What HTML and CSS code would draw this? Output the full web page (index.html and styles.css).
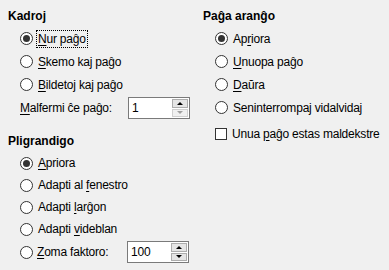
FILE: index.html
```html
<!DOCTYPE html>
<html lang="en">
<head>
    <meta charset="UTF-8">
    <title>Vido</title>
    <link rel="stylesheet" href="styles.css">
</head>
<body>
    <div class="dialog">
        <div class="column">
            <div class="group">
                <h2>Kadroj</h2>
                <label class="option"><span class="radio checked"></span><span class="focus"><u>N</u>ur paĝo</span></label>
                <label class="option"><span class="radio"></span><span><u>S</u>kemo kaj paĝo</span></label>
                <label class="option"><span class="radio"></span><span><u>B</u>ildetoj kaj paĝo</span></label>
                <div class="option field">
                    <span class="field-label"><u>M</u>alfermi ĉe paĝo:</span>
                    <div class="spin">
                        <span class="spin-value">1</span>
                        <div class="spin-buttons">
                            <span class="spin-btn up"></span>
                            <span class="spin-btn down disabled"></span>
                        </div>
                    </div>
                </div>
            </div>

            <div class="group zoom">
                <h2>Pligrandigo</h2>
                <label class="option small"><span class="radio checked"></span><span><u>A</u>priora</span></label>
                <label class="option small"><span class="radio"></span><span>Adapti al <u>f</u>enestro</span></label>
                <label class="option small"><span class="radio"></span><span>Adapti <u>l</u>arĝon</span></label>
                <label class="option small"><span class="radio"></span><span>Adapti <u>v</u>ideblan</span></label>
                <div class="option field tall">
                    <span class="radio"></span>
                    <span class="field-label short"><u>Z</u>oma faktoro:</span>
                    <div class="spin">
                        <span class="spin-value">100</span>
                        <div class="spin-buttons">
                            <span class="spin-btn up"></span>
                            <span class="spin-btn down"></span>
                        </div>
                    </div>
                </div>
            </div>
        </div>

        <div class="column">
            <div class="group">
                <h2>Paĝa aranĝo</h2>
                <label class="option"><span class="radio checked"></span><span>Ap<u>r</u>iora</span></label>
                <label class="option"><span class="radio"></span><span><u>U</u>nuopa paĝo</span></label>
                <label class="option"><span class="radio"></span><span><u>D</u>aŭra</span></label>
                <label class="option"><span class="radio"></span><span>Seninterrompa<u>j</u> vidalvidaj</span></label>
            </div>
            <label class="option check-row"><span class="checkbox"></span><span>Unua <u>p</u>aĝo estas maldekstre</span></label>
        </div>
    </div>
</body>
</html>
```

FILE: styles.css
```css
* {
    margin: 0;
    padding: 0;
    box-sizing: border-box;
}

body {
    background: #f0f0f0;
    color: #000;
    font-family: 'Liberation Sans', Arial, sans-serif;
    font-size: 12px;
}

.dialog {
    display: grid;
    grid-template-columns: 195px 1fr;
    padding: 8px 0 0 8px;
}

h2 {
    font-size: 12px;
    font-weight: bold;
    line-height: 16px;
    margin-bottom: 3px;
}

.option {
    display: flex;
    align-items: center;
    height: 23px;
    padding-left: 12px;
    gap: 5px;
    letter-spacing: -0.2px;
}

.option.small {
    height: 22px;
}

u {
    text-decoration: underline;
    text-underline-offset: 2px;
}

.focus {
    outline: 1px dotted #000;
    outline-offset: 1px;
}

.radio {
    width: 13px;
    height: 13px;
    border: 1px solid #333;
    border-radius: 50%;
    background: #fff;
    flex: none;
    display: flex;
    align-items: center;
    justify-content: center;
}

.radio.checked::after {
    content: "";
    width: 7px;
    height: 7px;
    border-radius: 50%;
    background: #333;
}

.checkbox {
    width: 12px;
    height: 12px;
    border: 1px solid #333;
    background: #fff;
    flex: none;
}

.field {
    height: 24px;
    gap: 4px;
}

.field-label {
    width: 104px;
}

.field-label.short {
    width: 86px;
}

.spin {
    width: 62px;
    height: 22px;
    border: 1px solid #7a7a7a;
    background: #fff;
    display: flex;
    align-items: center;
    justify-content: space-between;
    padding: 1px 1px 1px 3px;
}

.spin-buttons {
    display: flex;
    flex-direction: column;
    gap: 1px;
    height: 100%;
    width: 16px;
}

.spin-btn {
    flex: 1;
    background: #e5e5e5;
    border: 1px solid #adadad;
    display: flex;
    align-items: center;
    justify-content: center;
}

.spin-btn::after {
    content: "";
    border-left: 3px solid transparent;
    border-right: 3px solid transparent;
}

.spin-btn.up::after {
    border-bottom: 3px solid #000;
}

.spin-btn.down::after {
    border-top: 3px solid #000;
}

.spin-btn.disabled {
    background: #f0f0f0;
    border-color: #d0d0d0;
}

.spin-btn.disabled::after {
    border-top-color: #a0a0a0;
}

.zoom {
    margin-top: 13px;
}

.check-row {
    margin-top: 3px;
}
```
